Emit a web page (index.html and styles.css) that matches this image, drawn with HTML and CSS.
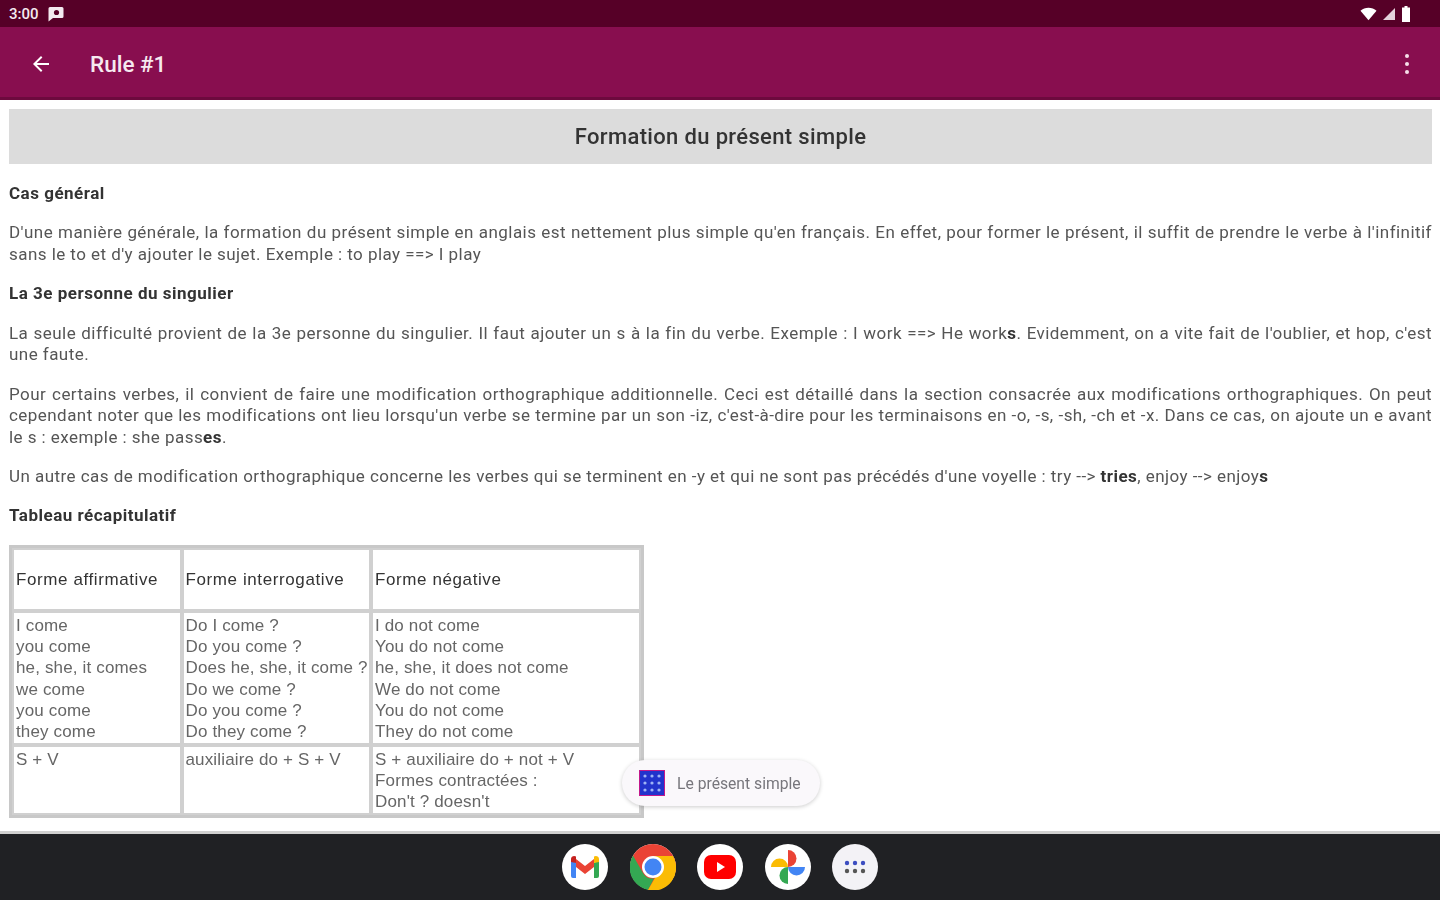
FILE: index.html
```html
<!DOCTYPE html>
<html lang="fr">
<head>
  <meta charset="UTF-8">
  <title>Rule #1</title>
  <link rel="stylesheet" href="styles.css">
</head>
<body>
  <div class="status-bar">
    <div class="status-left">
      <span class="clock">3:00</span>
      <svg class="status-msg" width="18" height="18" viewBox="0 0 18 18"><path d="M3 2h12a1.500 1.500 0 0 1 1.500 1.500v8A1.500 1.500 0 0 1 15 13H6l-4.500 3.500v-13A1.500 1.500 0 0 1 3 2z" fill="#f4eaf0"/><circle cx="9.500" cy="7.500" r="2.600" fill="#560027"/></svg>
    </div>
    <div class="status-right">
      <svg width="17" height="14" viewBox="0 0 18 14"><path d="M0.500 3.500C5 -0.800 13 -0.800 17.500 3.500L9 13.500z" fill="#fff"/></svg>
      <svg width="14" height="14" viewBox="0 0 14 14"><path d="M13 1v12H1z" fill="#e4d3dc"/></svg>
      <svg width="10" height="16" viewBox="0 0 10 16"><path d="M3.500 0h3v1.500H9V16H1V1.500h2.500z" fill="#fff"/></svg>
    </div>
  </div>

  <header class="app-bar">
    <svg class="back" width="24" height="24" viewBox="0 0 24 24"><path d="M20 11H7.800l5.600-5.600L12 4l-8 8 8 8 1.400-1.400L7.800 13H20z" fill="#fff"/></svg>
    <h1 class="app-title">Rule #1</h1>
    <svg class="more" width="24" height="24" viewBox="0 0 24 24"><circle cx="12" cy="4" r="2" fill="#f6dfe9"/><circle cx="12" cy="12" r="2" fill="#f6dfe9"/><circle cx="12" cy="20" r="2" fill="#f6dfe9"/></svg>
  </header>

  <main class="content">
    <h2 class="page-title">Formation du présent simple</h2>

    <p class="subhead">Cas général</p>
    <p>D'une manière générale, la formation du présent simple en anglais est nettement plus simple qu'en français. En effet, pour former le présent, il suffit de prendre le verbe à l'infinitif sans le to et d'y ajouter le sujet. Exemple : to play ==&gt; I play</p>

    <p class="subhead">La 3e personne du singulier</p>
    <p>La seule difficulté provient de la 3e personne du singulier. Il faut ajouter un s à la fin du verbe. Exemple : I work ==&gt; He work<b>s</b>. Evidemment, on a vite fait de l'oublier, et hop, c'est une faute.</p>
    <p>Pour certains verbes, il convient de faire une modification orthographique additionnelle. Ceci est détaillé dans la section consacrée aux modifications orthographiques. On peut cependant noter que les modifications ont lieu lorsqu'un verbe se termine par un son -iz, c'est-à-dire pour les terminaisons en -o, -s, -sh, -ch et -x. Dans ce cas, on ajoute un e avant le s : exemple : she pass<b>es</b>.</p>
    <p>Un autre cas de modification orthographique concerne les verbes qui se terminent en -y et qui ne sont pas précédés d'une voyelle : try --&gt; <b>tries</b>, enjoy --&gt; enjoy<b>s</b></p>

    <p class="subhead">Tableau récapitulatif</p>
    <table class="recap">
      <tr class="recap-head">
        <td class="col-a">Forme affirmative</td>
        <td class="col-b">Forme interrogative</td>
        <td class="col-c">Forme négative</td>
      </tr>
      <tr class="recap-body">
        <td>I come<br>you come<br>he, she, it comes<br>we come<br>you come<br>they come</td>
        <td>Do I come ?<br>Do you come ?<br>Does he, she, it come ?<br>Do we come ?<br>Do you come ?<br>Do they come ?</td>
        <td>I do not come<br>You do not come<br>he, she, it does not come<br>We do not come<br>You do not come<br>They do not come</td>
      </tr>
      <tr class="recap-foot">
        <td>S + V</td>
        <td>auxiliaire do + S + V</td>
        <td>S + auxiliaire do + not + V<br>Formes contractées :<br>Don't ? doesn't</td>
      </tr>
    </table>

    <div class="toast">
      <svg class="toast-icon" width="26" height="26" viewBox="0 0 26 26">
        <rect x="0.500" y="0.500" width="25" height="25" fill="#2233cc" stroke="#c2188b"/>
        <g fill="#9fb4f5">
          <circle cx="6" cy="6" r="1.600"/><circle cx="13" cy="6" r="1.600"/><circle cx="20" cy="6" r="1.600"/>
          <circle cx="6" cy="13" r="1.600"/><circle cx="13" cy="13" r="1.600"/><circle cx="20" cy="13" r="1.600"/>
          <circle cx="6" cy="20" r="1.600"/><circle cx="13" cy="20" r="1.600"/><circle cx="20" cy="20" r="1.600"/>
        </g>
      </svg>
      <span class="toast-text">Le présent simple</span>
    </div>
  </main>

  <footer class="dock">
    <div class="dock-app">
      <svg width="32" height="26" viewBox="0 0 32 26">
        <path d="M2 24V6l5 3v15H4a2 2 0 0 1-2-2z" fill="#4285f4"/>
        <path d="M25 24V9l5-3v16a2 2 0 0 1-2 2z" fill="#34a853"/>
        <path d="M7 13V5L16 12l9-7v8l-9 7z" fill="#ea4335"/>
        <path d="M2 8V5c0-2.500 3-4 5-2.500L7 9z" fill="#c5221f"/>
        <path d="M25 9V2.500c2-1.500 5 0 5 2.500v3z" fill="#fbbc04"/>
      </svg>
    </div>
    <div class="dock-app chrome">
      <svg width="46" height="46" viewBox="0 0 46 46">
        <circle cx="23" cy="23" r="23" fill="#ea4335"/>
        <path d="M3 11.500L13 29a11 11 0 0 0 11 5.500L18 46A23 23 0 0 1 3 11.500z" fill="#34a853"/>
        <path d="M23 12h20a23 23 0 0 1-25 34l11-19a11 11 0 0 0-6-15z" fill="#fbbc04"/>
        <circle cx="23" cy="23" r="11" fill="#fff"/>
        <circle cx="23" cy="23" r="8.500" fill="#4285f4"/>
      </svg>
    </div>
    <div class="dock-app">
      <svg width="32" height="24" viewBox="0 0 32 24">
        <rect x="0" y="0" width="32" height="24" rx="7" fill="#f00"/>
        <path d="M13 7l8 5-8 5z" fill="#fff"/>
      </svg>
    </div>
    <div class="dock-app">
      <svg width="36" height="36" viewBox="0 0 36 36">
        <path d="M18 18V1a8.500 8.500 0 0 1 0 17z" fill="#ea4335"/>
        <path d="M18 18h17a8.500 8.500 0 0 1-17 0z" fill="#4285f4"/>
        <path d="M18 18v17a8.500 8.500 0 0 1 0-17z" fill="#34a853"/>
        <path d="M18 18H1a8.500 8.500 0 0 1 17 0z" fill="#fbbc04"/>
      </svg>
    </div>
    <div class="dock-app apps">
      <svg width="22" height="14" viewBox="0 0 22 14">
        <circle cx="3" cy="3" r="2.200" fill="#3c4dc0"/><circle cx="11" cy="3" r="2.200" fill="#3c4dc0"/><circle cx="19" cy="3" r="2.200" fill="#3c4dc0"/>
        <circle cx="3" cy="11" r="2.200" fill="#555"/><circle cx="11" cy="11" r="2.200" fill="#555"/><circle cx="19" cy="11" r="2.200" fill="#555"/>
      </svg>
    </div>
  </footer>
</body>
</html>
```

FILE: styles.css
```css
* {
  box-sizing: border-box;
}
html, body {
  height: 100%;
}
body {
  margin: 0;
  display: flex;
  flex-direction: column;
  height: 900px;
  overflow: hidden;
  background: #fff;
  font-family: Roboto, "Liberation Sans", sans-serif;
  color: #555;
  filter: blur(0.6px);
}
.status-bar {
  height: 27px;
  background: #560027;
  display: flex;
  align-items: center;
  justify-content: space-between;
  padding: 0 29px 0 9px;
  color: #f4eaf0;
}
.status-left, .status-right {
  display: flex;
  align-items: center;
}
.status-left {
  gap: 8px;
}
.status-right {
  gap: 5px;
}
.clock {
  font-size: 15px;
  font-weight: 500;
}
.app-bar {
  height: 73px;
  background: #880e4f;
  border-bottom: 3px solid #6d0a3e;
  display: flex;
  align-items: center;
  padding: 4px 21px 0 29px;
  color: #f6e9ef;
}
.app-title {
  margin: 0 0 0 37px;
  flex: 1;
  font-size: 22.500px;
  font-weight: 500;
}
.content {
  position: relative;
  flex: 1;
  padding: 9px 8px 0 9px;
  overflow: hidden;
}
.page-title {
  margin: 0 0 19px;
  height: 55px;
  line-height: 55px;
  background: #dcdcdc;
  color: #333;
  text-align: center;
  font-size: 22px;
  font-weight: 500;
  letter-spacing: 0.35px;
}
p {
  margin: 0 0 17.900px;
  font-size: 17px;
  line-height: 21.500px;
  letter-spacing: 0.45px;
  text-align: justify;
}
.subhead {
  font-weight: 700;
  color: #333;
  letter-spacing: 0.5px;
}
b {
  color: #333;
}
.recap {
  width: 635px;
  height: 272px;
  border: 3px solid #c8c8c8;
  border-spacing: 0;
  font-family: "Liberation Sans", Arial, sans-serif;
  font-size: 17px;
  line-height: 21.300px;
  letter-spacing: 0.15px;
  color: #666;
}
.recap td {
  border: 2px solid #d0d0d0;
  padding: 2px 1px 0 2px;
  vertical-align: top;
  white-space: nowrap;
}
.recap .recap-head td {
  height: 63px;
  padding-top: 0;
  vertical-align: middle;
  color: #333;
  letter-spacing: 0.6px;
}
.recap-body td {
  height: 134px;
}
.col-a {
  width: 169.500px;
}
.col-b {
  width: 189.500px;
}
.toast {
  position: absolute;
  left: 622px;
  top: 660px;
  width: 198px;
  height: 46px;
  display: flex;
  align-items: center;
  gap: 12px;
  padding-left: 17px;
  border-radius: 23px;
  background: #faf8fb;
  box-shadow: 0 1px 4px rgba(0, 0, 0, 0.2);
}
.toast-text {
  font-size: 15.700px;
  color: #77767c;
}
.dock {
  height: 69px;
  flex: none;
  background: #202124;
  border-top: 3px solid #d0d0d0;
  display: flex;
  justify-content: center;
  align-items: center;
  gap: 21.500px;
}
.dock-app {
  width: 46px;
  height: 46px;
  border-radius: 50%;
  background: #fff;
  display: flex;
  align-items: center;
  justify-content: center;
}
.apps {
  background: #f3f2f6;
}
```
